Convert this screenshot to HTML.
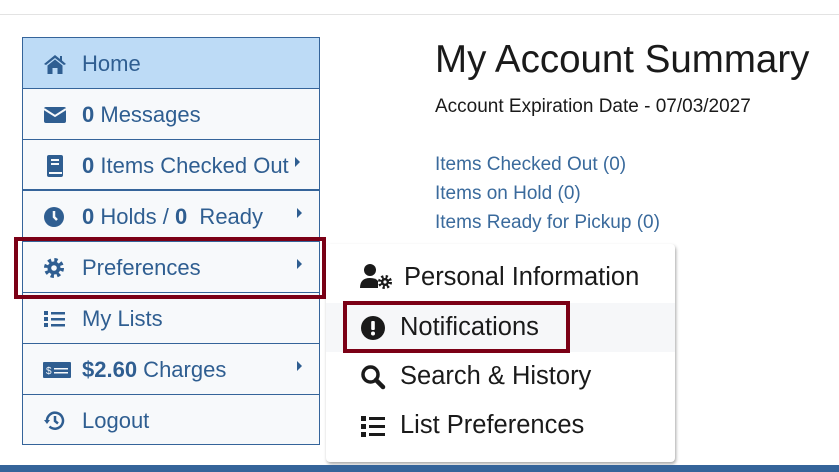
<!DOCTYPE html>
<html><head><style>
*{box-sizing:border-box;margin:0;padding:0}
body{width:839px;height:472px;overflow:hidden;background:#fff;font-family:"Liberation Sans",Arial,sans-serif;position:relative}
.top{position:absolute;left:0;right:0;top:14px;height:1px;background:#e3e3e3}
.side{position:absolute;left:22px;top:37px;width:298px;height:408px;border:1px solid #35649a;background:#f7f9fb}
.row{position:absolute;left:0;width:296px;height:51px;color:#2f5e91;font-size:22px;line-height:51px;padding-left:59px;border-bottom:1px solid #35649a}
.row b{font-weight:bold}
.row .ic{position:absolute;left:20px;top:15px;width:24px;height:22px}
.ar{position:absolute;left:274px;top:20px;width:0;height:0;border-left:5px solid #2f5e91;border-top:5px solid transparent;border-bottom:5px solid transparent}
.bot{position:absolute;left:0;right:0;top:465px;height:7px;background:#35649a}
h1{position:absolute;left:435px;top:38px;font-size:38.5px;font-weight:normal;color:#1a1a1a;white-space:nowrap}
.exp{position:absolute;left:435px;top:96px;font-size:19px;color:#1a1a1a;white-space:nowrap}
.lk{position:absolute;left:435px;font-size:19px;color:#3a6a9c;white-space:nowrap}
.dd{position:absolute;left:326px;top:244px;width:349px;height:218px;background:#fff;border-radius:4px;box-shadow:1px 2px 3px rgba(0,0,0,.35)}
.di{position:absolute;left:0;width:349px;height:49px;font-size:25.5px;color:#1a1a1a;line-height:49px;padding-left:74px;white-space:nowrap}
.di svg{position:absolute;left:34px;top:12px}
.redbox{position:absolute;border:4px solid #7b0016}
</style></head><body>
<div class="top"></div>
<div class="side">
 <div class="row" style="top:0;background:#bddbf6"><svg class="ic" viewBox="0 0 24 22"><path d="M12 2 L1 11 L3 12 L12 5 L21 12 L23 11 L19 7.5 V3 H17 V6 Z M4.5 12.5 L12 6.5 L19.5 12.5 V21 H14.5 V15 H9.5 V21 H4.5Z" fill="#2f5e91"/></svg>Home</div>
 <div class="row" style="top:51px"><svg class="ic" viewBox="0 0 24 22"><rect x="1" y="3" width="22" height="16" rx="2" fill="#2f5e91"/><path d="M1 5 L12 12 L23 5" stroke="#f7f9fb" stroke-width="2" fill="none"/></svg><b>0</b> Messages</div>
 <div class="row" style="top:102px;border-bottom-width:2px"><svg class="ic" viewBox="0 0 24 22"><rect x="4" y="0" width="16" height="22" rx="2" fill="#2f5e91"/><rect x="8" y="4" width="8" height="2" fill="#f7f9fb"/><rect x="8" y="8" width="8" height="2" fill="#f7f9fb"/><rect x="6" y="17" width="13" height="2" fill="#f7f9fb"/></svg><b>0</b> Items Checked Out<span class="ar" style="left:272px;top:17px"></span></div>
 <div class="row" style="top:153px;border-bottom-width:2px"><svg class="ic" viewBox="0 0 24 22"><circle cx="11" cy="11" r="10" fill="#2f5e91"/><path d="M11 5 V11 L14 14" stroke="#f7f9fb" stroke-width="2.5" fill="none"/></svg><b>0</b> Holds / <b>0</b>&nbsp; Ready<span class="ar" style="top:17px"></span></div>
 <div class="row" style="top:204px"><svg class="ic" viewBox="0 0 24 22"><circle cx="11" cy="11" r="7.5" fill="none" stroke="#2f5e91" stroke-width="5" stroke-dasharray="3 2.9"/><circle cx="11" cy="11" r="6.5" fill="#2f5e91"/><circle cx="11" cy="11" r="2.8" fill="#f7f9fb"/></svg>Preferences<span class="ar" style="top:17px"></span></div>
 <div class="row" style="top:255px"><svg class="ic" viewBox="0 0 24 22"><rect x="1" y="3" width="4" height="4" fill="#2f5e91"/><rect x="1" y="9" width="4" height="4" fill="#2f5e91"/><rect x="1" y="15" width="4" height="4" fill="#2f5e91"/><rect x="8" y="4" width="14" height="2.5" fill="#2f5e91"/><rect x="8" y="10" width="14" height="2.5" fill="#2f5e91"/><rect x="8" y="16" width="14" height="2.5" fill="#2f5e91"/></svg>My Lists</div>
 <div class="row" style="top:306px"><svg class="ic" viewBox="0 0 28 22" style="width:28px;left:20px"><rect x="0" y="3" width="28" height="16" rx="1" fill="#2f5e91"/><text x="3" y="15" font-size="10" fill="#f7f9fb" font-family="Liberation Sans">$</text><rect x="11" y="9" width="14" height="1.5" fill="#f7f9fb"/><rect x="11" y="13" width="14" height="1.5" fill="#f7f9fb"/></svg><b>$2.60</b> Charges<span class="ar" style="top:17px"></span></div>
 <div class="row" style="top:357px;border-bottom:none"><svg class="ic" viewBox="0 0 24 22"><path d="M4 11 A8 8 0 1 1 6.5 16.5" stroke="#2f5e91" stroke-width="2.5" fill="none"/><path d="M1 10 L4 14 L7 10Z" fill="#2f5e91"/><path d="M12 6 V11 L15 13.5" stroke="#2f5e91" stroke-width="2.5" fill="none"/></svg>Logout</div>
</div>
<div class="redbox" style="left:14px;top:237px;width:312px;height:62px"></div>
<h1>My Account Summary</h1>
<div class="exp">Account Expiration Date - 07/03/2027</div>
<div class="lk" style="top:154px">Items Checked Out (0)</div>
<div class="lk" style="top:183px">Items on Hold (0)</div>
<div class="lk" style="top:212px">Items Ready for Pickup (0)</div>
<div class="dd">
 <div class="di" style="top:9px;padding-left:78px"><svg width="34" height="26" viewBox="0 0 34 26" style="left:34px;top:11px"><circle cx="10" cy="6" r="6" fill="#1a1a1a"/><path d="M0 24 Q0 14 10 14 Q16 14 18 17 V24Z" fill="#1a1a1a"/><circle cx="25" cy="18" r="5" fill="none" stroke="#1a1a1a" stroke-width="4" stroke-dasharray="2 2"/><circle cx="25" cy="18" r="4" fill="#1a1a1a"/><circle cx="25" cy="18" r="1.6" fill="#fff"/></svg>Personal Information</div>
 <div class="di" style="top:59px;background:#f6f7f9"><svg width="26" height="26" viewBox="0 0 26 26"><circle cx="13" cy="13" r="12" fill="#1a1a1a"/><rect x="11.2" y="6" width="3.6" height="9" rx="1" fill="#fff"/><circle cx="13" cy="18.5" r="2" fill="#fff"/></svg>Notifications</div>
 <div class="di" style="top:108px"><svg width="26" height="26" viewBox="0 0 26 26"><circle cx="10.5" cy="10.5" r="7.5" fill="none" stroke="#1a1a1a" stroke-width="3.5"/><path d="M16 16 L23 23" stroke="#1a1a1a" stroke-width="4.5" stroke-linecap="round"/></svg>Search &amp; History</div>
 <div class="di" style="top:157px"><svg width="26" height="26" viewBox="0 0 26 26"><rect x="1" y="3" width="5" height="5" fill="#1a1a1a"/><rect x="1" y="11" width="5" height="5" fill="#1a1a1a"/><rect x="1" y="19" width="5" height="5" fill="#1a1a1a"/><rect x="9" y="4" width="16" height="3" fill="#1a1a1a"/><rect x="9" y="12" width="16" height="3" fill="#1a1a1a"/><rect x="9" y="20" width="16" height="3" fill="#1a1a1a"/></svg>List Preferences</div>
</div>
<div class="redbox" style="left:343px;top:301px;width:227px;height:52px"></div>
<div class="bot"></div>
</body></html>
